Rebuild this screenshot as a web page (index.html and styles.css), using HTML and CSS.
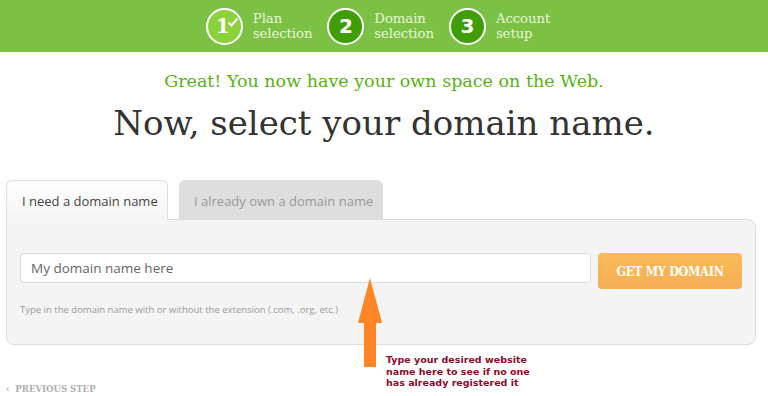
FILE: index.html
```html
<!DOCTYPE html>
<html>
<head>
<meta charset="utf-8">
<link rel="stylesheet" href="styles.css">
</head>
<body>
<header class="steps">
  <div class="step">
    <div class="circle done">1
      <svg class="check" width="12" height="11" viewBox="0 0 12 11"><path d="M1.5 5.5 L4.5 8.5 L10.5 1.5" fill="none" stroke="#fff" stroke-width="2.2"/></svg>
    </div>
    <div class="label">Plan<br>selection</div>
  </div>
  <div class="step">
    <div class="circle">2</div>
    <div class="label">Domain<br>selection</div>
  </div>
  <div class="step">
    <div class="circle">3</div>
    <div class="label">Account<br>setup</div>
  </div>
</header>
<main class="main">
  <p class="lead">Great! You now have your own space on the Web.</p>
  <h1 class="title">Now, select your domain name.</h1>
  <div class="tabs">
    <div class="tab active">I need a domain name</div>
    <div class="tab">I already own a domain name</div>
  </div>
  <div class="panel">
    <div class="row">
      <input class="field" type="text" placeholder="My domain name here">
      <button class="btn">GET MY DOMAIN</button>
    </div>
    <p class="help">Type in the domain name with or without the extension (.com, .org, etc.)</p>
  </div>
  <a class="prev">&lsaquo;&nbsp;&nbsp;PREVIOUS STEP</a>
  <svg class="arrow" width="26" height="90" viewBox="0 0 26 90"><path d="M13 0 L25 45 L19 45 L19 89 L7 89 L7 45 L1 45 Z" fill="#ff8526"/></svg>
  <div class="note">Type your desired website<br>name here to see if no one<br>has already registered it</div>
</main>
</body>
</html>
```
FILE: styles.css
```css
* { box-sizing: border-box; }
html, body { margin: 0; padding: 0; background: #fff; }
body { width: 768px; height: 396px; overflow: hidden; position: relative; }

.steps {
  height: 52px;
  background: #7bc143;
  display: flex;
  justify-content: center;
  align-items: center;
  gap: 15px;
  padding-right: 12px;
}
.step { display: flex; align-items: center; gap: 10px; }
.circle {
  position: relative;
  width: 37px; height: 37px;
  border: 2px solid #fff;
  border-radius: 50%;
  background: #3f9d06;
  color: #fff;
  font-family: "DejaVu Sans", sans-serif;
  font-weight: bold;
  font-size: 20px;
  display: flex; align-items: center; justify-content: center;
}
.circle.done { background: #8dd13a; font-family: "DejaVu Serif", serif; padding-right: 3px; }
.check { position: absolute; right: 2px; top: 7px; }
.label {
  font-family: "DejaVu Serif", serif;
  font-size: 13.3px;
  line-height: 15px;
  color: #eaf5dc;
  letter-spacing: -0.1px;
}

.main { padding: 0 6px; }
.lead {
  margin: 18px 0 0;
  text-align: center;
  font-family: "DejaVu Serif", serif;
  font-size: 17.5px;
  line-height: 22px;
  color: #57b30f;
}
.title {
  margin: 8px 0 0;
  text-align: center;
  font-family: "DejaVu Serif", serif;
  font-weight: normal;
  font-size: 34px;
  line-height: 46px;
  color: #333;
}
.tabs { display: flex; gap: 11px; margin-top: 34px; height: 40px; position: relative; z-index: 1; }
.tab {
  height: 39px;
  padding: 12px 0 0 15px;
  font-family: "Open Sans", sans-serif;
  font-size: 13px;
  white-space: nowrap;
  color: #999;
  background: #dedede;
  border-radius: 6px 6px 0 0;
  width: 204px;
}
.tab.active {
  width: 162px;
  height: 40px;
  color: #444;
  background: linear-gradient(#fff, #f4f4f4);
  border: 1px solid #ddd;
  border-bottom: none;
  padding: 11px 0 0 15px;
}
.panel {
  margin-top: -1px;
  width: 750px;
  height: 126px;
  background: #f4f4f4;
  border: 1px solid #ddd;
  border-radius: 0 8px 8px 8px;
  padding: 33px 13px 0 13px;
}
.row { display: flex; gap: 7px; align-items: flex-start; }
.field {
  width: 571px; height: 30px;
  border: 1px solid #ddd;
  border-radius: 4px;
  background: #fff;
  padding: 0 10px;
  font-family: "Open Sans", sans-serif;
  font-size: 13.5px;
  outline: none;
}
.field::placeholder { color: #666; }
.btn {
  width: 144px; height: 36px;
  border: none;
  border-radius: 4px;
  background: linear-gradient(#fdbb58, #f3ae55);
  color: #fff;
  font-family: "DejaVu Serif", serif;
  font-stretch: semi-condensed;
  font-weight: bold;
  font-size: 12.5px;
  letter-spacing: -0.3px;
  padding: 0;
}
.help {
  margin: 14px 0 0;
  font-family: "Open Sans", sans-serif;
  font-size: 9.5px;
  color: #999;
}
.prev {
  display: block;
  margin-top: 38px;
  font-family: "DejaVu Serif", serif;
  font-stretch: semi-condensed;
  font-weight: bold;
  font-size: 9.5px;
  color: #b0b0b0;
}
.arrow { position: absolute; left: 357px; top: 278px; }
.note {
  position: absolute;
  left: 386px; top: 354px;
  font-family: "DejaVu Sans", sans-serif;
  font-weight: bold;
  font-size: 9.5px;
  line-height: 11.5px;
  color: #8c0b2b;
}
```
